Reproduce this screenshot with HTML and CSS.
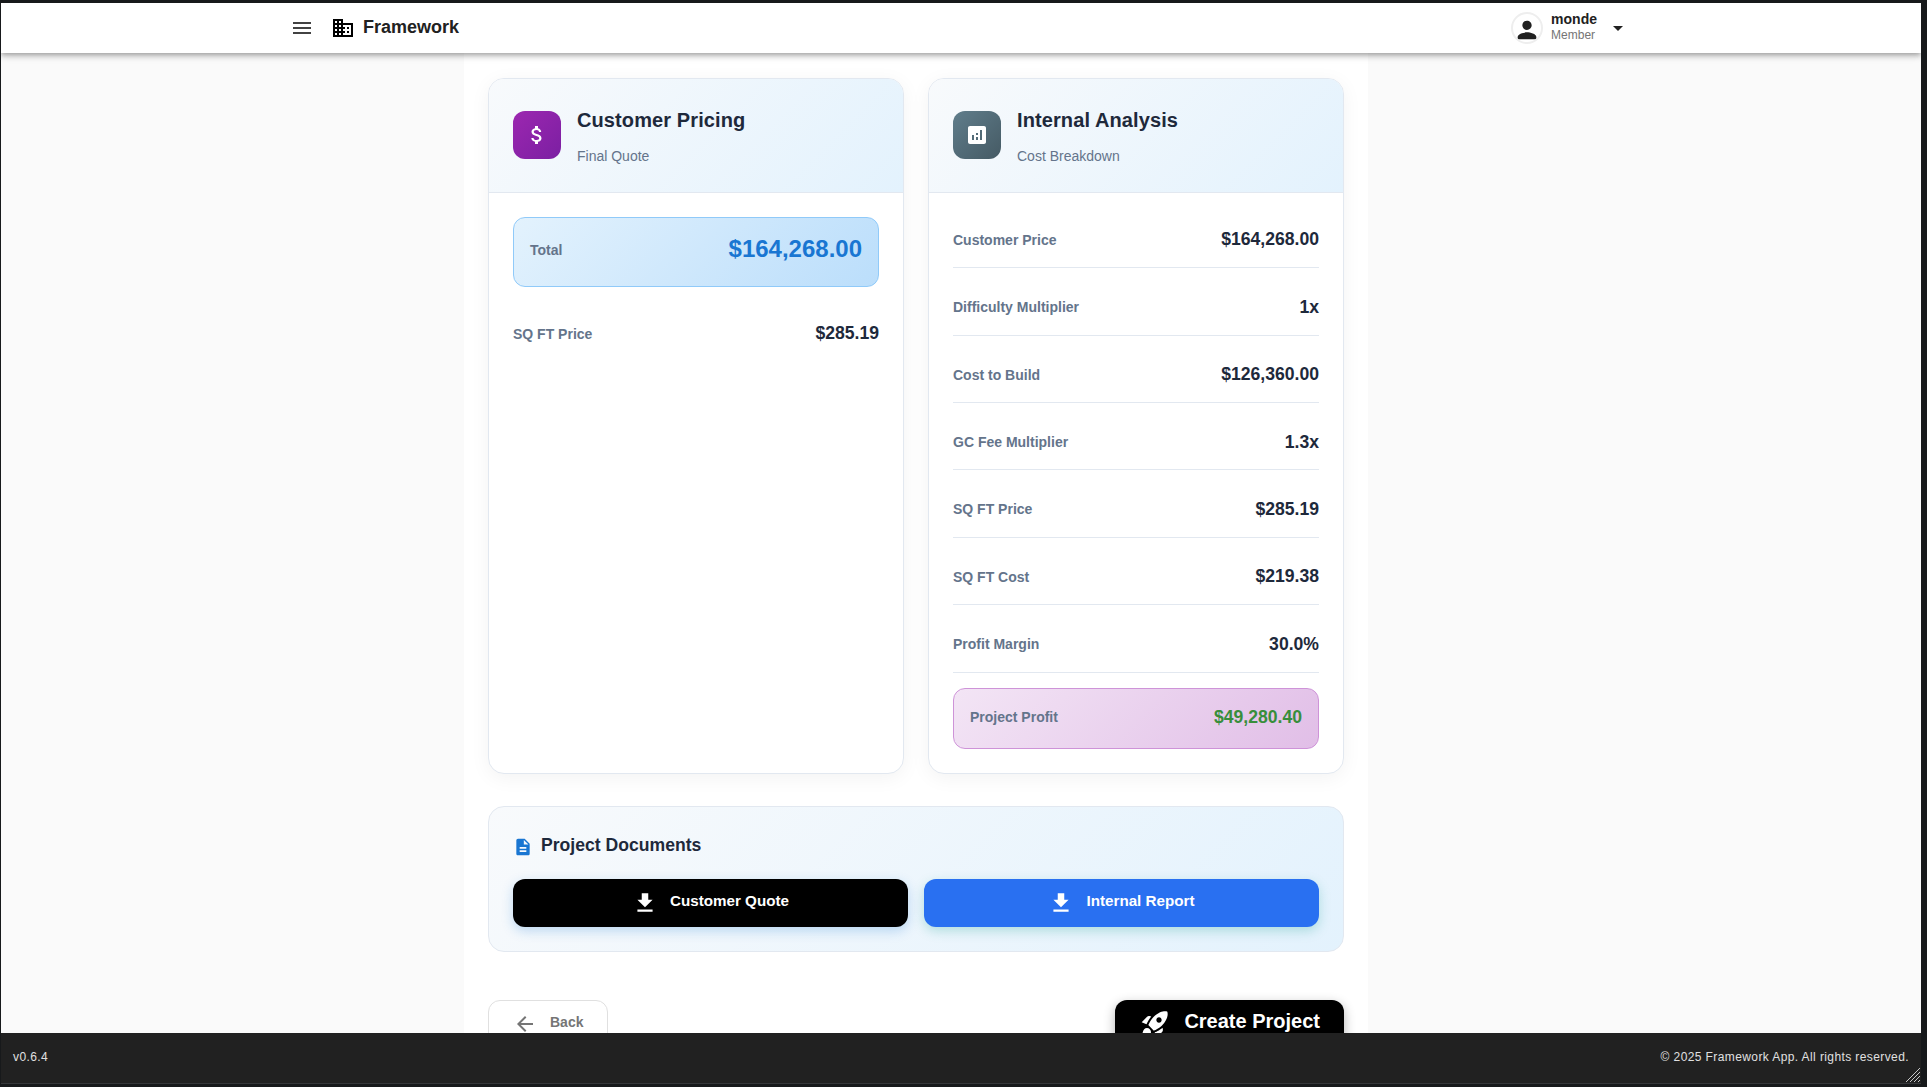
FILE: index.html
```html
<!DOCTYPE html>
<html lang="en">
<head>
  <meta charset="UTF-8">
  <title>Framework</title>
  <link rel="stylesheet" href="styles.css">
</head>
<body>
  <div class="window">
    <header class="topbar">
      <div class="brand">
        <svg class="icon menu-icon" viewBox="0 0 24 24"><path d="M3 18h18v-2H3v2zm0-5h18v-2H3v2zm0-7v2h18V6H3z"/></svg>
        <svg class="icon building-icon" viewBox="0 0 24 24"><path d="M12 7V3H2v18h20V7H12zM6 19H4v-2h2v2zm0-4H4v-2h2v2zm0-4H4V9h2v2zm0-4H4V5h2v2zm4 12H8v-2h2v2zm0-4H8v-2h2v2zm0-4H8V9h2v2zm0-4H8V5h2v2zm10 12h-8v-2h2v-2h-2v-2h2v-2h-2V9h8v10zm-2-8h-2v2h2v-2zm0 4h-2v2h2v-2z"/></svg>
        <span class="brand-name">Framework</span>
      </div>
      <div class="user">
        <div class="avatar">
          <svg class="person-icon" viewBox="0 0 24 24"><path d="M12 12c2.21 0 4-1.79 4-4s-1.79-4-4-4-4 1.79-4 4 1.79 4 4 4zm0 2c-2.67 0-8 1.34-8 4v2h16v-2c0-2.66-5.33-4-8-4z"/></svg>
        </div>
        <div class="user-text">
          <div class="user-name">monde</div>
          <div class="user-role">Member</div>
        </div>
        <svg class="icon caret-icon" viewBox="0 0 24 24"><path d="M7 10l5 5 5-5z"/></svg>
      </div>
    </header>

    <main class="main">
      <div class="column">
        <div class="cards">
          <section class="card">
            <div class="card-head">
              <div class="tile tile-purple">
                <svg class="icon" viewBox="0 0 24 24"><path d="M11.8 10.9c-2.27-.59-3-1.2-3-2.15 0-1.09 1.01-1.85 2.7-1.85 1.78 0 2.44.85 2.5 2.1h2.21c-.07-1.72-1.12-3.3-3.21-3.81V3h-3v2.16c-1.94.42-3.5 1.68-3.5 3.61 0 2.31 1.91 3.46 4.7 4.13 2.5.6 3 1.48 3 2.41 0 .69-.49 1.79-2.7 1.79-2.06 0-2.87-.92-2.98-2.1h-2.2c.12 2.19 1.76 3.42 3.68 3.83V21h3v-2.15c1.95-.37 3.5-1.5 3.5-3.55 0-2.84-2.43-3.81-4.7-4.4z"/></svg>
              </div>
              <div>
                <h3 class="card-title">Customer Pricing</h3>
                <div class="card-sub">Final Quote</div>
              </div>
            </div>
            <div class="card-body">
              <div class="total-box">
                <span class="label">Total</span>
                <span class="total-value">$164,268.00</span>
              </div>
              <div class="row row-plain">
                <span class="label">SQ FT Price</span>
                <span class="value">$285.19</span>
              </div>
            </div>
          </section>

          <section class="card">
            <div class="card-head">
              <div class="tile tile-slate">
                <svg class="icon" viewBox="0 0 24 24"><path d="M19 3H5c-1.1 0-2 .9-2 2v14c0 1.1.9 2 2 2h14c1.1 0 2-.9 2-2V5c0-1.1-.9-2-2-2zM9 17H7v-5h2v5zm8 0h-2V7h2v10zm-4 0h-2v-3h2v3zm0-5h-2v-2h2v2z"/></svg>
              </div>
              <div>
                <h3 class="card-title">Internal Analysis</h3>
                <div class="card-sub">Cost Breakdown</div>
              </div>
            </div>
            <div class="card-body">
              <div class="row"><span class="label">Customer Price</span><span class="value">$164,268.00</span></div>
              <div class="row"><span class="label">Difficulty Multiplier</span><span class="value">1x</span></div>
              <div class="row"><span class="label">Cost to Build</span><span class="value">$126,360.00</span></div>
              <div class="row"><span class="label">GC Fee Multiplier</span><span class="value">1.3x</span></div>
              <div class="row"><span class="label">SQ FT Price</span><span class="value">$285.19</span></div>
              <div class="row"><span class="label">SQ FT Cost</span><span class="value">$219.38</span></div>
              <div class="row"><span class="label">Profit Margin</span><span class="value">30.0%</span></div>
              <div class="profit-box">
                <span class="label">Project Profit</span>
                <span class="profit-value">$49,280.40</span>
              </div>
            </div>
          </section>
        </div>

        <section class="docs">
          <div class="docs-title">
            <svg class="doc-icon" viewBox="0 0 24 24"><path d="M14 2H6c-1.1 0-1.99.9-1.99 2L4 20c0 1.1.89 2 1.99 2H18c1.1 0 2-.9 2-2V8l-6-6zm2 16H8v-2h8v2zm0-4H8v-2h8v2zm-3-5V3.5L18.5 9H13z"/></svg>
            <span class="raised">Project Documents</span>
          </div>
          <div class="docs-buttons">
            <button class="doc-btn doc-btn-black">
              <svg class="download-icon" viewBox="0 0 24 24"><path d="M19 9h-4V3H9v6H5l7 7 7-7zM5 18v2h14v-2H5z"/></svg>
              <span class="raised-more">Customer Quote</span>
            </button>
            <button class="doc-btn doc-btn-blue">
              <svg class="download-icon" viewBox="0 0 24 24"><path d="M19 9h-4V3H9v6H5l7 7 7-7zM5 18v2h14v-2H5z"/></svg>
              <span class="raised-more">Internal Report</span>
            </button>
          </div>
        </section>

        <div class="actions">
          <button class="back-btn">
            <svg class="icon" viewBox="0 0 24 24"><path d="M20 11H7.83l5.59-5.59L12 4l-8 8 8 8 1.41-1.41L7.83 13H20v-2z"/></svg>
            <span class="raised">Back</span>
          </button>
          <button class="create-btn">
            <svg class="rocket-icon" viewBox="0 0 24 24"><path d="M9.19 6.35c-2.04 2.29-3.44 5.58-3.57 5.89L2 10.69l4.05-4.05c.47-.47 1.15-.68 1.81-.55l1.33.26zM11.17 17s3.74-1.55 5.89-3.7c5.4-5.4 4.5-9.62 4.21-10.57-.95-.3-5.17-1.19-10.57 4.21C8.55 9.09 7 12.83 7 12.83L11.17 17zm6.48-2.19c-2.29 2.04-5.58 3.44-5.89 3.57L13.31 22l4.05-4.05c.47-.47.68-1.15.55-1.81l-.26-1.33zM9 18c0 .83-.34 1.58-.88 2.12C6.94 21.3 2 22 2 22s.7-4.94 1.88-6.12C4.42 15.34 5.17 15 6 15c1.66 0 3 1.34 3 3zm4-9c0-1.1.9-2 2-2s2 .9 2 2-.9 2-2 2-2-.9-2-2z"/></svg>
            <span class="raised-more">Create Project</span>
          </button>
        </div>
      </div>
    </main>

    <footer class="footer">
      <span>v0.6.4</span>
      <span>© 2025 Framework App. All rights reserved.</span>
      <svg class="grip" viewBox="0 0 14 14"><path d="M0 14L14 0M4 14L14 4M8 14L14 8M12 14L14 12" stroke="#c8c8c8" stroke-width="1" fill="none"/></svg>
    </footer>
  </div>
</body>
</html>
```

FILE: styles.css
```css
html, body { margin: 0; height: 1087px; overflow: hidden; background: #17191b; }
body { font-family: "Liberation Sans", Arial, sans-serif; color: #1e293b; }

.window { position: relative; display: flex; flex-direction: column; height: 1081px; margin: 3px 6px 3px 1px; background: #fafafa; overflow: hidden; }
.icon { width: 24px; height: 24px; fill: currentColor; flex: none; }
.raised { margin-bottom: 3px; }
.raised-more { margin-bottom: 5px; }

/* top bar */
.topbar { position: relative; z-index: 2; display: flex; justify-content: space-between; align-items: center; height: 50px; flex: none; padding: 0 291px 0 289px; background: #fff; box-shadow: 0 2px 4px -1px rgba(0,0,0,.2), 0 4px 5px 0 rgba(0,0,0,.14), 0 1px 10px 0 rgba(0,0,0,.12); }
.brand { display: flex; align-items: center; }
.menu-icon { fill: #424242; }
.building-icon { margin-left: 17px; fill: #000; }
.brand-name { margin: 0 0 2px 8px; font-size: 18px; font-weight: 700; color: #212121; }
.user { display: flex; align-items: center; }
.avatar { display: flex; align-items: center; justify-content: center; box-sizing: border-box; width: 32px; height: 32px; border: 2px solid #eee; border-radius: 50%; overflow: hidden; }
.person-icon { width: 28px; height: 28px; margin-top: 4px; flex: none; fill: #212121; }
.user-text { margin: 0 0 2px 8px; }
.user-name { font-size: 14px; font-weight: 700; line-height: 17px; color: #212121; }
.user-role { font-size: 12px; line-height: 15px; color: #757575; }
.caret-icon { margin-left: 9px; fill: #212121; }

/* main column */
.main { flex: 1; min-height: 0; overflow: hidden; }
.column { box-sizing: border-box; width: 904px; margin-left: 463px; padding: 25px 24px 0; background: #fff; min-height: 100%; }
.cards { display: grid; grid-template-columns: 416px 416px; gap: 24px; }
.card { border: 1px solid #e2e8f0; border-radius: 16px; background: #fff; box-shadow: 0 4px 20px rgba(0,0,0,.05); overflow: hidden; }
.card-head { display: flex; align-items: center; gap: 16px; padding: 24px; background: linear-gradient(135deg, #f8fafc, #e3f2fd); border-bottom: 1px solid #e2e8f0; }
.tile { display: flex; align-items: center; justify-content: center; width: 48px; height: 48px; border-radius: 12px; color: #fff; flex: none; }
.tile-purple { background: linear-gradient(135deg, #9c27b0, #7b1fa2); }
.tile-slate { background: linear-gradient(135deg, #607d8b, #455a64); }
.card-title { margin: 0 0 7px; font-size: 20px; font-weight: 700; letter-spacing: .1px; line-height: 1.75; color: #1e293b; }
.card-sub { font-size: 14px; line-height: 22.5px; color: #64748b; }
.card-body { padding: 24px; }

.label { font-size: 14px; font-weight: 700; color: #64748b; }
.value { font-size: 17.6px; font-weight: 700; color: #1e293b; }
.row { display: flex; justify-content: space-between; align-items: center; height: 30.8px; padding: 8px 0 12px; margin-bottom: 15.6px; border-bottom: 1px solid #e2e8f0; }
.row-plain { border-bottom: 0; margin-bottom: 0; }
.total-box, .profit-box { display: flex; justify-content: space-between; align-items: center; border-radius: 12px; }
.total-box { margin-bottom: 24px; padding: 14px 16px 18px; background: linear-gradient(135deg, #e3f2fd, #bbdefb); border: 1px solid #90caf9; }
.total-value { margin-bottom: 2px; font-size: 24px; font-weight: 700; line-height: 34px; color: #1976d2; }
.profit-box { padding: 15px 16px 17px; background: linear-gradient(135deg, #f3e5f5, #e1bee7); border: 1px solid #ce93d8; }
.profit-value { font-size: 17.6px; font-weight: 700; line-height: 26.4px; color: #388e3c; }

/* documents */
.docs { margin-top: 32px; padding: 24px; border: 1px solid #e2e8f0; border-radius: 16px; background: linear-gradient(135deg, #f8fafc, #e3f2fd); }
.docs-title { display: flex; align-items: center; gap: 8px; height: 32px; margin-bottom: 16px; font-size: 17.6px; font-weight: 700; line-height: 26px; color: #1e293b; }
.doc-icon { width: 20px; height: 20px; fill: #1976d2; flex: none; }
.docs-buttons { display: grid; grid-template-columns: 1fr 1fr; gap: 16px; }
.doc-btn { display: flex; align-items: center; justify-content: center; gap: 12px; height: 48px; border: 0; border-radius: 12px; font-family: inherit; font-size: 15.2px; font-weight: 700; color: #fff; }
.doc-btn-black { background: #000; box-shadow: 0 4px 12px rgba(25,118,210,.25); }
.doc-btn-blue { background: #2970f1; box-shadow: 0 4px 12px rgba(0,150,136,.25); }
.download-icon { width: 26px; height: 26px; fill: #fff; flex: none; }

/* bottom actions, cut off by the footer */
.actions { display: flex; justify-content: space-between; margin-top: 48px; }
.back-btn, .create-btn { display: flex; align-items: center; height: 48px; box-sizing: border-box; font-family: inherit; font-weight: 700; border-radius: 12px; }
.back-btn { gap: 13px; padding: 0 24px; border: 1px solid #e0e0e0; background: #fff; font-size: 14px; color: #757575; }
.create-btn { gap: 13px; padding: 0 24px; border: 0; background: #000; font-size: 20px; color: #fff; box-shadow: 0 4px 12px rgba(0,0,0,.3); }
.rocket-icon { width: 32px; height: 32px; fill: #fff; flex: none; }

/* footer */
.footer { position: relative; z-index: 2; display: flex; justify-content: space-between; align-items: center; box-sizing: border-box; height: 51px; flex: none; padding: 0 12px 2px; background: #212121; border-bottom: 1px solid #35373a; color: #e0e0e0; font-size: 12px; letter-spacing: .4px; }
.grip { position: absolute; right: 1px; bottom: 1px; width: 14px; height: 14px; }
```
